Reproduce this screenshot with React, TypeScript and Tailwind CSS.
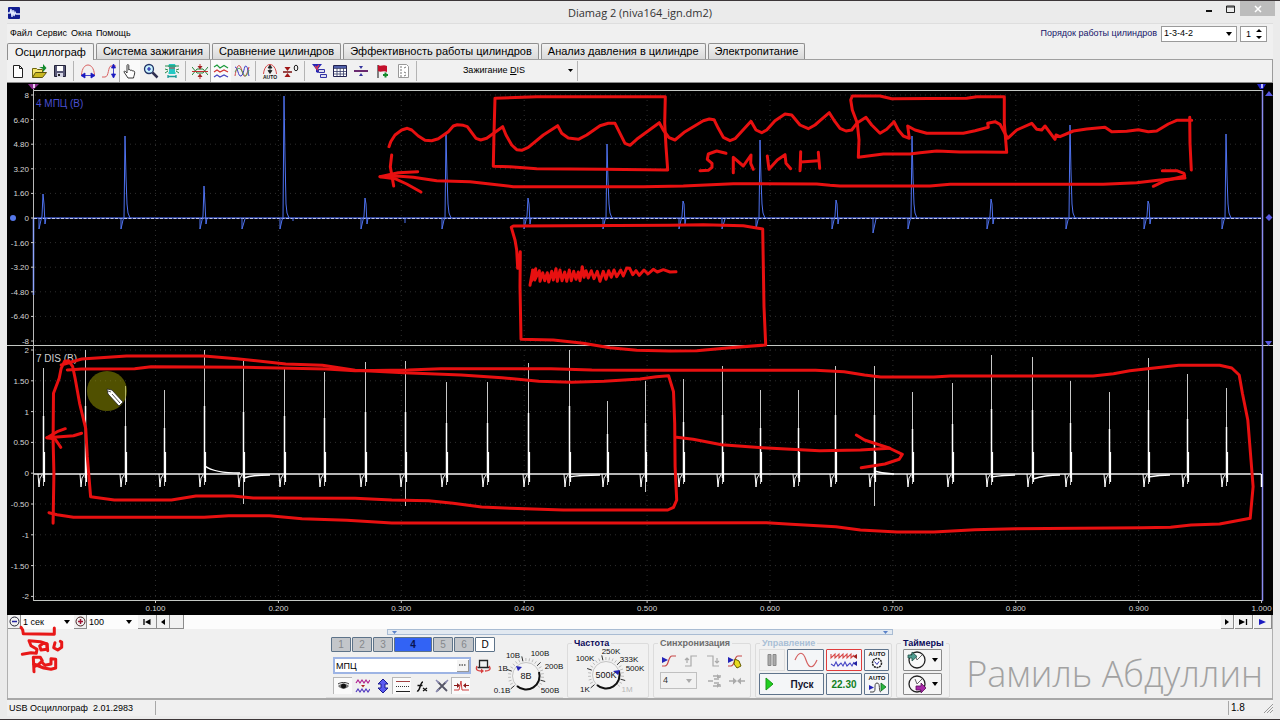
import type { ReactNode } from "react";

type Pt = [number, number];

/** Turns stroke samples taken on a finer grid into an SVG path in plot units. */
function stroke(ox: number, oy: number, kx: number, ky: number, pts: Pt[]): string {
  return pts
    .map(([x, y], i) => `${i ? "L" : "M"}${(ox + x / kx).toFixed(1)} ${(oy + y / ky).toFixed(1)}`)
    .join("");
}
const join = (a: string, b: string) => a + "L" + b.slice(1);
const a = (p: Pt[]) => stroke(370, 80, 3, 3, p);
const b = (p: Pt[]) => stroke(820, 80, 3, 3, p);
const c = (p: Pt[]) => stroke(0, 340, 2.45, 3, p);
const d = (p: Pt[]) => stroke(640, 340, 2.45, 3, p);
const e = (p: Pt[]) => stroke(0, 600, 3, 3, p);

const markerStrokes: string[] = [
  join(
    a([[57, 200], [62, 185], [75, 165], [95, 150], [112, 145], [125, 150], [145, 168], [165, 181], [185, 182], [205, 176], [235, 155], [250, 138], [262, 134], [280, 136], [292, 140], [318, 175], [332, 180], [350, 175], [398, 140], [408, 165], [425, 195], [440, 209], [455, 211], [475, 202], [520, 165], [563, 137], [575, 160], [595, 174], [625, 178], [650, 165], [690, 137], [715, 130], [735, 130], [750, 160], [765, 190], [780, 196], [800, 178], [868, 128], [880, 150], [897, 173], [915, 180], [945, 155], [1000, 122], [1018, 117], [1032, 119], [1045, 145], [1060, 172], [1080, 182], [1095, 176], [1143, 124], [1158, 150], [1175, 158], [1190, 150], [1215, 122], [1245, 102], [1265, 105], [1290, 135], [1315, 146], [1335, 135]]),
    b([[0, 122], [28, 98], [45, 125], [60, 145], [78, 153], [95, 150], [110, 130], [138, 112], [155, 135], [180, 160], [200, 148], [222, 125], [235, 150], [250, 168], [268, 175], [263, 138], [285, 150], [320, 160], [430, 160], [465, 152], [505, 142], [503, 130], [525, 125], [540, 133], [552, 155], [563, 175], [590, 150], [635, 130], [650, 148], [665, 150], [675, 138], [705, 178], [708, 165], [720, 170], [760, 153], [800, 147], [855, 142], [875, 155], [920, 154], [955, 149], [985, 155], [1010, 153], [1045, 132], [1070, 121], [1115, 121]]),
  ),
  a([[375, 55], [500, 50], [886, 50], [884, 130], [888, 200], [893, 270], [700, 268], [500, 266], [420, 260], [370, 259], [372, 160], [375, 55]]),
  b([[115, 232], [117, 180], [112, 130], [97, 90], [92, 60], [97, 48], [180, 48], [215, 56], [440, 55], [470, 50], [553, 50], [553, 130], [560, 217], [480, 216], [420, 216], [350, 213], [300, 218], [270, 222], [190, 222], [115, 232]]),
  b([[1109, 112], [1110, 190], [1114, 270]]),
  join(
    a([[30, 290], [80, 288], [130, 292], [200, 302], [300, 305], [360, 312], [430, 320], [820, 320], [940, 318], [1090, 311], [1340, 312]]),
    b([[30, 316], [60, 318], [330, 318], [390, 313], [850, 313], [950, 308], [1020, 300], [1095, 294]]),
  ),
  a([[143, 275], [85, 278], [30, 290], [75, 296], [110, 312], [153, 336]]),
  a([[65, 225], [61, 260], [71, 318]]),
  b([[1027, 272], [1070, 272], [1092, 280], [1094, 288], [1035, 302], [1000, 319]]),
  a([[1068, 220], [1040, 213], [1015, 222], [1012, 238], [1026, 250], [1026, 262], [1015, 271], [990, 272]]),
  a([[1090, 278], [1090, 232], [1120, 258], [1143, 225], [1142, 250], [1150, 268]]),
  a([[1192, 228], [1197, 268], [1222, 240], [1245, 224], [1248, 250], [1262, 266]]),
  a([[1292, 215], [1290, 272], [1292, 246], [1345, 242]]),
  a([[1345, 217], [1349, 265]]),
  a([[430, 438], [424, 442], [435, 480], [440, 510], [443, 565], [451, 515], [450, 620], [453, 778], [550, 780], [640, 790], [720, 803], [800, 811], [900, 813], [980, 812], [1080, 803], [1187, 795], [1182, 680], [1178, 447], [1120, 437], [1000, 434], [900, 436], [430, 438]]),
  a([[480, 616], [488, 570], [484, 604], [497, 566], [494, 600], [508, 572], [510, 604], [518, 578], [524, 602], [532, 578], [536, 606], [545, 574], [550, 600], [558, 566], [562, 604], [570, 570], [576, 602], [584, 576], [590, 604], [598, 570], [604, 602], [611, 574], [618, 598], [625, 576], [630, 602], [637, 560], [642, 592], [648, 572], [655, 594], [664, 572], [672, 596], [682, 574], [690, 604], [700, 574], [708, 598], [716, 572], [724, 592], [732, 570], [740, 590], [752, 570], [760, 588], [770, 564], [779, 565], [788, 584], [798, 572], [808, 586], [822, 570], [834, 582], [850, 568], [862, 576], [880, 569], [900, 576], [918, 575]]),
  join(
    join(
      c([[130, 550], [132, 400], [130, 300], [131, 160], [145, 115], [150, 85], [158, 64], [168, 62], [178, 80], [184, 115], [195, 190], [210, 265], [214, 350], [222, 470], [280, 480], [420, 480], [480, 468], [570, 468], [620, 474], [870, 475], [960, 480], [1050, 482], [1110, 490], [1180, 501], [1250, 505], [1380, 510], [1500, 510]]),
      d([[0, 510], [68, 510], [82, 502], [90, 480], [86, 380], [85, 250], [82, 155], [70, 107], [40, 110], [0, 117]]),
    ),
    c([[1480, 124], [1400, 127], [1320, 124], [1230, 113], [1130, 105], [990, 98], [870, 91], [790, 76], [700, 72], [580, 56], [500, 48], [310, 48], [200, 57], [150, 75]]),
  ),
  join(
    join(
      c([[165, 90], [200, 87], [330, 86], [370, 80], [600, 82], [800, 87], [870, 92], [1000, 90], [1080, 86], [1350, 86], [1450, 90]]),
      d([[0, 91], [430, 91], [500, 95], [550, 105], [590, 111], [720, 111], [760, 108], [1110, 108], [1160, 101], [1200, 92], [1260, 84], [1320, 76], [1420, 76], [1450, 84], [1468, 105], [1476, 160], [1489, 240], [1497, 360], [1502, 440], [1495, 535], [1420, 552], [1350, 555], [1300, 562], [1230, 563], [920, 566], [820, 569], [720, 576], [630, 576], [540, 570], [480, 560], [370, 553], [310, 548], [0, 549]]),
    ),
    c([[1500, 549], [960, 549], [850, 541], [740, 536], [660, 527], [560, 527], [500, 532], [180, 532], [140, 524], [120, 518]]),
  ),
  c([[200, 280], [180, 287], [115, 293], [140, 275], [160, 266]]),
  c([[115, 293], [135, 297], [149, 322]]),
  d([[90, 292], [130, 298], [200, 314], [300, 323], [440, 332], [540, 330], [612, 325]]),
  d([[530, 285], [550, 300], [610, 324], [643, 343], [635, 358], [600, 372], [542, 383]]),
];

const noteStrokes: string[] = [
  e([[60, 82], [65, 90], [67, 101], [160, 103], [160, 84]]),
  e([[140, 152], [138, 132], [118, 125], [84, 122], [90, 137], [108, 148], [106, 160], [90, 158], [64, 163]]),
  e([[120, 150], [116, 138], [126, 130], [138, 132], [138, 148], [120, 150]]),
  e([[162, 128], [158, 143], [170, 150], [182, 142], [182, 126], [178, 124]]),
  e([[99, 215], [97, 172], [118, 172], [124, 182], [112, 194], [100, 200]]),
  e([[98, 192], [128, 204], [150, 208], [164, 204], [164, 178], [150, 176], [150, 192], [132, 196], [122, 186]]),
];

// Channel 4: time mark, peak and whether the pulse is a main one.
const mpc: [number, number, boolean][] = [
  [43, 194, false], [125, 136, true], [204, 186, false], [284, 96, true], [365, 198, false], [446, 134, true],
  [528, 198, false], [607, 144, true], [683, 201, false], [760, 140, true], [836, 200, false], [912, 136, true],
  [991, 199, false], [1070, 125, true], [1148, 201, false], [1226, 134, true],
];
const mpcPath = mpc
  .map(([x, top, main]) =>
    main
      ? `M${x - 4} 218V229L${x - 2} 220L${x - 1} 218L${x} ${top}L${x + 1} ${Math.round((218 + top) / 2)}L${x + 2} 204L${x + 3} 213L${x + 5} 218`
      : `M${x - 4} 218V229L${x - 2} 220L${x - 1} 216L${x} ${top}L${x + 1} 204L${x + 2} 224L${x + 3} 218`,
  )
  .join("");

// Channel 7: time mark, peak, lowest point.
const dis: [number, number, number][] = [
  [43, 368, 486], [85, 350, 486], [125, 386, 485], [164, 390, 486], [204, 350, 485], [243, 361, 504], [284, 369, 485],
  [324, 372, 486], [365, 362, 486], [405, 361, 506], [446, 382, 485], [487, 382, 485], [528, 363, 485], [569, 350, 486],
  [607, 401, 485], [645, 381, 492], [683, 379, 484], [722, 366, 484], [760, 390, 484], [798, 390, 486], [835, 366, 484],
  [874, 366, 506], [912, 392, 484], [952, 383, 484], [991, 355, 485], [1032, 357, 484], [1070, 381, 485], [1109, 392, 484],
  [1148, 358, 484], [1187, 374, 484], [1226, 388, 486],
];

const mpcScale = ["8", "6.40", "4.80", "3.20", "1.60", "0", "-1.60", "-3.20", "-4.80", "-6.40", "-8"];
const disScale = ["2", "1.50", "1", "0.50", "0", "-0.50", "-1", "-1.50", "-2"];
const timeScale = ["0.100", "0.200", "0.300", "0.400", "0.500", "0.600", "0.700", "0.800", "0.900", "1.000"];
const mpcY = (i: number) => 95 + i * 24.6;
const disY = (i: number) => 350 + i * 30.8;
const timeX = (i: number) => 155.5 + i * 122.9;

function Plot() {
  return (
    <svg viewBox="7 82 1266 533" className="block h-auto w-full bg-black" role="img" aria-label="Осциллограмма">
      <rect x="7" y="82" width="1266" height="1" fill="#8a8a8a" />
      <g stroke="#2e2e2e" strokeDasharray="1 4" fill="none">
        {mpcScale.map((_, i) => (i === 5 ? null : <path key={i} d={`M35 ${mpcY(i)}H1258`} />))}
        {disScale.map((_, i) => (i === 4 ? null : <path key={i} d={`M35 ${disY(i)}H1258`} />))}
        {timeScale.slice(0, 9).map((_, i) => <path key={i} d={`M${timeX(i)} 95V600`} />)}
      </g>
      <path d="M33 90.5H1262M7 345.5H1273M33 600.5H1262" stroke="#c4c8c4" fill="none" />
      <path d="M33.500 88V601" stroke="#b9b9b9" fill="none" />
      <path d="M33.500 218V295" stroke="#8fa6ff" strokeWidth="1.500" />
      <path d="M1262.500 90V601" stroke="#8c8cf0" strokeWidth="1.500" fill="none" />
      <g stroke="#c9c9c9">
        {mpcScale.map((_, i) => <path key={i} d={`M31 ${mpcY(i)}h3`} />)}
        {disScale.map((_, i) => <path key={i} d={`M31 ${disY(i)}h3`} />)}
        {timeScale.map((_, i) => <path key={i} d={`M${timeX(i)} 600v3`} />)}
      </g>
      <g fill="#d4d4d4" fontSize="8" textAnchor="end" className="font-['Liberation_Sans',sans-serif]">
        {mpcScale.map((t, i) => <text key={t} x="29" y={mpcY(i) + 3}>{t}</text>)}
        {disScale.map((t, i) => <text key={t} x="29" y={disY(i) + 3}>{t}</text>)}
      </g>
      <g fill="#d4d4d4" fontSize="8" textAnchor="middle" className="font-['Liberation_Sans',sans-serif]">
        {timeScale.map((t, i) => <text key={t} x={timeX(i)} y="611">{t}</text>)}
      </g>
      <text x="36" y="107" fontSize="10" fill="#4a4fd0" className="font-['Liberation_Sans',sans-serif]">4 МПЦ (В)</text>
      <text x="36" y="362" fontSize="10" fill="#d0d0d0" className="font-['Liberation_Sans',sans-serif]">7 DIS (В)</text>
      <path d="M28 84h11l-5 5h-2z" fill="#8a2a8e" />
      <path d="M33 84h2v4h-2z" fill="#e8c8f0" />
      <path d="M1257 84h9l-3 5h-3z" fill="#2323c8" />
      <path d="M1261 84h2v4h-2z" fill="#b8b8ff" />
      <g fill="#5858e0">
        <path d="M1265 96l4-5 4 5zM1265 341h7l-3.500 5zM1265.500 217.500l3.500-3.500 3.500 3.500-3.500 3.500z" />
        <circle cx="13" cy="218" r="3" fill="#5577e8" />
      </g>

      <path d="M34 218H1261" stroke="#3d55c4" strokeWidth="1.500" />
      <path d="M34 218.500H1261" stroke="#e4e8ff" strokeDasharray="3 1.500" strokeWidth=".8" />
      <path d={mpcPath + "M242 218V229L245 219M722 218V229L725 219M873 218V233L876 219M405 218v5M293 218v3"} stroke="#4f72f0" strokeWidth="1" fill="none" />

      <path d="M34 474H1261" stroke="#f2f2f2" strokeWidth="1.600" />
      {dis.map(([x, top, low]) => (
        <g key={x} fill="none" stroke="#fff">
          <path d={`M${x + 0.5} ${top}V${low}`} stroke="#c8c8c8" />
          <path d={`M${x + 0.5} ${Math.round(474 - (474 - top) * 0.55)}V478`} strokeWidth="1.500" />
          <path d={`M${x + 1.500} 452V482`} strokeWidth="1.200" />
          <path d={`M${x - 5} 474L${x - 4} 487L${x - 3} 478L${x - 1} 475`} />
        </g>
      ))}
      <path d="M205 466Q214 473 240 473M244 478Q252 475 270 475M569 477Q580 475 600 475M874 471Q884 474 894 474M991 477Q1005 475 1015 475M1033 479Q1045 475 1060 475M1148 477Q1160 475 1170 475M1261.500 474V487" stroke="#fff" strokeWidth="1.500" fill="none" />

      <circle cx="107" cy="391" r="20" fill="#a0a000" fillOpacity=".5" />
      <path d="M107 389l5 1 11 12-4 4-11-12z" fill="#fff" stroke="#222" strokeWidth=".8" />
      <path d="M112 394l8 9M108 391l3 1" stroke="#555" />

      <g stroke="#e81010" strokeWidth="3" strokeLinecap="round" strokeLinejoin="round" fill="none">
        {markerStrokes.map((p) => <path key={p} d={p} />)}
      </g>
    </svg>
  );
}

function Icon({ children, w = 16, h = 16 }: { children: ReactNode; w?: number; h?: number }) {
  return (
    <svg width={w} height={h} viewBox={`0 0 ${w} ${h}`} fill="none" aria-hidden="true" className="shrink-0">
      {children}
    </svg>
  );
}

const toolGroups: { label: string; pressed?: boolean; art: ReactNode }[][] = [
  [
    { label: "Новый", art: <path d="M3.500 2.500h6l3 3v9h-9zM9.500 2.500v3h3" fill="#fff" stroke="#222" /> },
    { label: "Открыть", art: <><path d="M1.500 14.500v-9h4l1 1h5v3" fill="#f2e36a" stroke="#6b6411" /><path d="M1.500 14.500l3-5h11l-4 5z" fill="#c9b820" stroke="#5b540f" /><path d="M8 4h4V1l3.500 4-3.500 4V6" fill="#128a2c" /></> },
    { label: "Сохранить", art: <><path d="M2.500 2.500h11v11h-11z" fill="#5a5a78" stroke="#222238" /><path d="M5 3h6v5H5z" fill="#fff" /><path d="M5 10h6v4H5z" fill="#d5d5e5" /><path d="M6 11h2v2H6z" fill="#222" /></> },
  ],
  [
    { label: "Масштаб по времени", art: <><path d="M1.500 12C2 5 5 2 8 2s6 3 6.500 10" stroke="#d86060" /><path d="M2 12.500h12M1 12.500l4-2.500v5zM15 12.500l-4-2.500v5z" stroke="#1919c0" strokeWidth=".8" fill="#1919c0" /></> },
    { label: "Масштаб по амплитуде", art: <><path d="M1 14h3c4 0 3-11 6-11h5" stroke="#d86060" /><path d="M12.500 3v11M12.500 1l-2 4h4zM12.500 15l-2-4h4z" stroke="#1919c0" fill="#1919c0" strokeWidth=".8" /></> },
    { label: "Рука", pressed: true, art: <path d="M6 15l-4-6c0-1.500 1.500-1 3 1V2.500c0-1.200 1.800-1.200 1.800 0V7c1-.8 1.700-.3 1.900.5 1-.6 1.800-.2 2 .6 1-.4 2 0 2 1.200 0 2.700-1 3.700-1.200 5.700z" fill="#fff" stroke="#222" strokeWidth=".9" /> },
    { label: "Лупа", art: <><circle cx="6" cy="6" r="4.500" fill="#c8f4ff" stroke="#223366" strokeWidth="1.300" /><path d="M4 6h4M6 4v4" stroke="#1d1da8" strokeWidth="1.200" /><path d="M9.500 9.500l5 5" stroke="#303050" strokeWidth="2.500" /></> },
    { label: "Область", art: <><path d="M5 1h6l1 3h-1v5l1 1-1 1H5l-1-1 1-1V4H4z" fill="#25c8c4" /><path d="M1 3h14M1 6l3 1M15 6l-3 1M1 10l3-2M15 10l-3-2" stroke="#2a8a4a" /><path d="M5 5h6" stroke="#c04040" /><path d="M4 13.500h8M4 12v3M12 12v3" stroke="#1a9a96" strokeWidth="1.300" /></> },
  ],
  [
    { label: "Сжать", art: <><path d="M0 12L5 6h6l5 6M0 4l5 6h6l5-6" stroke="#25853a" /><path d="M0 8.500h16M8 1v4M8 16v-4" stroke="#c03030" /><path d="M5.500 3h5L8 6.500zM5.500 14h5L8 10.500z" fill="#a02222" /></> },
    { label: "Раздельно", pressed: true, art: <><path d="M1 4l3-2 3 3 4-2.500L15 5" stroke="#1c9a3b" strokeWidth="1.200" /><path d="M1 9l3-2 3 2 4-2 4 2" stroke="#d23333" strokeWidth="1.200" /><path d="M1 14l3-2 3 2 4-2 4 2" stroke="#4545c0" strokeWidth="1.200" /></> },
    { label: "Совместно", art: <><path d="M1 13C3 0 6 0 8 8s4 7 7-4" stroke="#d04848" /><path d="M1 4c3 0 3 10 6 9S10 2 12 3s2 7 3 10" stroke="#3838c8" /><path d="M1 9c3-5 5-5 8 1s4 2 6-3" stroke="#35a04a" strokeWidth=".8" /></> },
  ],
  [
    { label: "Автомасштаб", art: <><path d="M1.500 11C2 5 5 1.500 8 1.500S14 5 14.500 11" stroke="#d84848" /><path d="M8 3v7M8 2L6 5h4zM8 10.500L6 7.500h4z" stroke="#222" strokeWidth=".8" fill="#222" /><text x="8" y="15.500" fontSize="5" fontWeight="700" textAnchor="middle" fill="#111">AUTO</text></> },
    { label: "Обнулить", art: <><path d="M0 9h9" stroke="#7a1010" strokeWidth="1.500" /><path d="M1.500 4h6l-3 4zM1.500 14h6l-3-4z" fill="#a01616" /><ellipse cx="13" cy="5" rx="1.800" ry="2.800" stroke="#222" /></> },
  ],
  [
    { label: "Фильтр", art: <><path d="M1 1h10L7 6v4L5 9V6z" fill="#2626b8" /><path d="M4 3l4 5M8 2l-3 4" stroke="#d23b56" strokeWidth="1.500" /><path d="M7.500 6.500h6v3h-6zM9.500 11.500h6v3h-6z" fill="#dde" stroke="#3333a4" /></> },
    { label: "Таблица", art: <><path d="M1.500 2.500h13v11h-13z" fill="#fff" stroke="#222250" /><path d="M2 3h12v2H2z" fill="#4f5fa8" /><path d="M2 5.500h12M2 8.500h12M2 11h12M5 5v8M8.200 5v8M11.500 5v8" stroke="#333a66" strokeWidth=".8" /></> },
    { label: "Деление", art: <><path d="M1 8h14" stroke="#5b1460" strokeWidth="1.800" /><path d="M6 3h4L8 6zM6 13h4l-2-3z" fill="#33339c" /></> },
    { label: "Метка", art: <><path d="M4 2v13" stroke="#444" strokeWidth="1.300" /><path d="M4 2c3 2 5-1 9 1v6c-4-2-6 1-9-1z" fill="#c4102c" /><path d="M9 12h5M11.500 9.500v5" stroke="#148a2c" strokeWidth="2" /></> },
    { label: "Отчёт", art: <><path d="M3.500 1.500h8l2 2v11h-10z" fill="#fff" stroke="#999" /><path d="M5 4h2M5 7h2M5 10h2M5 13h2M9 5l2-1M9 9l2 1M9 13l2-1" stroke="#777" /></> },
  ],
];

function Toolbar() {
  return (
    <div className="flex h-[22px] items-center border-r border-[#9a9a9a] bg-[#f1f1f1]" role="toolbar" aria-label="Инструменты">
      {toolGroups.map((group, g) => (
        <div key={g} className="flex items-center">
          {group.map((t) => (
            <button
              key={t.label}
              type="button"
              aria-label={t.label}
              className={t.pressed ? "flex h-[22px] w-[21px] items-center justify-center border-l border-[#a8a8a8] bg-[#fafafa]" : "flex h-[22px] w-[21px] items-center justify-center"}
            >
              <Icon>{t.art}</Icon>
            </button>
          ))}
          <span className="mx-[3px] h-[20px] w-px bg-[#b4b4b4]" />
        </div>
      ))}
      <button type="button" className="flex h-[20px] w-[158px] items-center border-r border-[#b4b4b4] pr-1 text-[9px] text-black">
        <span className="flex-1 text-center">Зажигание <u>D</u>IS</span>
        <Icon w={5} h={4}><path d="M0 0h5L2.500 3z" fill="#000" /></Icon>
      </button>
    </div>
  );
}

const tabs = ["Осциллограф", "Система зажигания", "Сравнение цилиндров", "Эффективность работы цилиндров", "Анализ давления в цилиндре", "Электропитание"];

function Select({ label, options, className, arrow = "#000" }: { label: string; options: string[]; className: string; arrow?: string }) {
  return (
    <span className={`relative inline-flex items-center ${className}`}>
      <select aria-label={label} className="h-full w-full appearance-none bg-transparent pl-[2px] text-[9px] leading-none outline-none">
        {options.map((o) => <option key={o}>{o}</option>)}
      </select>
      <svg width="6" height="4" viewBox="0 0 6 4" className="pointer-events-none absolute right-[4px]" aria-hidden="true">
        <path d="M0 0h6L3 4z" fill={arrow} />
      </svg>
    </span>
  );
}

function Group({ title, titleClass, className, children }: { title: string; titleClass: string; className: string; children: ReactNode }) {
  return (
    <fieldset className={`h-[61px] rounded-[2px] border border-[#dcdcdc] bg-[#f1f1f1] ${className}`}>
      <legend className={`ml-[4px] px-[2px] text-[9px] leading-[12px] font-bold ${titleClass}`}>{title}</legend>
      {children}
    </fieldset>
  );
}

type Mark = { t: string; x: number; y: number; faded?: boolean };
function Knob({ width, cx, value, marks, pointer }: { width: number; cx: number; value: string; marks: Mark[]; pointer: string }) {
  const ticks = Array.from({ length: 23 }, (_, i) => 140 + i * 11.8);
  return (
    <svg width={width} height="50" viewBox={`0 0 ${width} 50`} role="img" aria-label={value} className="shrink-0 font-['Liberation_Sans',sans-serif]">
      {ticks.map((t, i) => {
        const r = (t * Math.PI) / 180;
        const far = i % 5 === 0 ? 20 : 18;
        return (
          <line
            key={t}
            x1={(cx + 15 * Math.cos(r)).toFixed(1)}
            y1={(29 + 15 * Math.sin(r)).toFixed(1)}
            x2={(cx + far * Math.cos(r)).toFixed(1)}
            y2={(29 + far * Math.sin(r)).toFixed(1)}
            stroke={i % 5 === 0 ? "#333" : "#bbb"}
          />
        );
      })}
      <circle cx={cx} cy="29" r="13.500" fill="#f4f4f4" stroke="#c4c4c4" />
      <path d={`M${cx + 13} 25A13.500 13.500 0 0 1 ${cx - 9} 39`} stroke="#111" strokeWidth="2" fill="none" />
      <path d={pointer} fill="#2424b4" />
      <text x={cx} y="32" fontSize="9" textAnchor="middle" fill="#111">{value}</text>
      {marks.map((m) => (
        <text key={m.t} x={m.x} y={m.y} fontSize="8" textAnchor="middle" fill={m.faded ? "#b8b8b8" : "#111"}>{m.t}</text>
      ))}
    </svg>
  );
}

const channelTools: { label: string; pressed?: boolean; art: ReactNode }[] = [
  { label: "Видимость", pressed: true, art: <><path d="M2 8c3-3 8-3 11 0-3 3.500-8 3.500-11 0z" fill="#777" /><circle cx="7.500" cy="8" r="2.500" fill="#111" /><path d="M2 6c3-2 8-2 11 0" stroke="#333" /></> },
  { label: "Сигнал", art: <><path d="M1 5l2-3 2 3 2-3 2 3 2-3 2 3 2-3" stroke="#b02090" strokeWidth="1.200" /><path d="M1 14l2-3 2 3 2-3 2 3 2-3 2 3 2-3" stroke="#5038c0" strokeWidth="1.200" /><path d="M6 7h4L8 9.500z" fill="#b02020" /></> },
  { label: "Смещение", art: <path d="M8 1l5 5h-3v4h3l-5 5-5-5h3V6H3z" fill="#5a5af0" stroke="#1a1a90" /> },
  { label: "Уровни", pressed: true, art: <><path d="M1 3.500h14" stroke="#a04040" /><path d="M1 8.500h14" stroke="#333" strokeDasharray="1 1" /><path d="M1 13.500h14" stroke="#222" /></> },
  { label: "Функция", art: <><path d="M3 13c3 1 3-9 6-9M3.500 7.500h5" stroke="#111" strokeWidth="1.500" /><path d="M9 10l4 3M13 10l-4 3" stroke="#111" strokeWidth="1.200" /></> },
  { label: "Настройка", art: <><path d="M4 4l9 9M12 4l-9 9" stroke="#556" strokeWidth="1.800" /><path d="M2 2l3 3M11 5l3-3M2 14l3-3" stroke="#8888b0" strokeWidth="1.500" /></> },
  { label: "Разделить", pressed: true, art: <><path d="M0 12h5l2-9 1 9h7" stroke="#d04040" /><path d="M0 7.500h4M11 7.500h4" stroke="#8a1a1a" strokeWidth="1.200" /><path d="M3 5l3 2.500L3 10zM12 5L9 7.500 12 10z" fill="#8a1a1a" /></> },
];

const chip = "flex h-[15px] items-center justify-center rounded-[1px] border border-[#5d7389] text-[10px] leading-none";
const ctl = "flex items-center justify-center rounded-[1px] border border-[#5f748c] bg-[#f4f6f8]";

function ControlPanel() {
  return (
    <section className="relative flex flex-col items-center" aria-label="Панель управления">
      <div className="flex h-[6px] w-[506px] items-center justify-between border border-[#a9bcd3] bg-[#e2e9f1] px-[4px]">
        <Icon w={5} h={3}><path d="M0 0h5L2.500 3z" fill="#5a82c8" /></Icon>
        <Icon w={5} h={3}><path d="M0 0h5L2.500 3z" fill="#5a82c8" /></Icon>
      </div>
      <div className="flex items-end gap-[4px] pt-[2px] pr-[4px]">
        <div className="flex h-[61px] w-[237px] border-b border-[#dcdcdc] pl-[5px]">
          <div className="flex w-[166px] shrink-0 flex-col">
            <div className="flex gap-px">
              {["1", "2", "3"].map((n) => <button key={n} type="button" className={`${chip} w-[20px] bg-[#c3c6ca] text-[#85888c]`}>{n}</button>)}
              <button type="button" className={`${chip} w-[38px] border-[#1b3a90] bg-[#3263f5] font-bold text-[#0a1450]`}>4</button>
              {["5", "6"].map((n) => <button key={n} type="button" className={`${chip} w-[20px] bg-[#c3c6ca] text-[#85888c]`}>{n}</button>)}
              <button type="button" className={`${chip} w-[20px] bg-white text-black`}>D</button>
            </div>
            <div className="mt-[5px] flex items-center gap-[4px] pl-[2px]">
              <div className="flex h-[17px] w-[138px] items-center border-2 border-[#9db4e4] bg-white">
                <input aria-label="Название канала" defaultValue="МПЦ" className="h-full w-full min-w-0 bg-transparent pl-px text-[9px] outline-none" />
                <button type="button" aria-label="Выбрать" className="flex h-[12px] w-[12px] shrink-0 items-center justify-center border-r border-b border-[#999] bg-[#f4f4f4]">
                  <Icon w={7} h={2}><path d="M0 1h7" stroke="#111" strokeDasharray="1.500 1" /></Icon>
                </button>
              </div>
              <Icon><path d="M4.500 2.500h8v7h-8zM2.500 9.500h12" stroke="#222" strokeWidth="1.300" /><path d="M2 8c-2 4 1 5 4 5M14 8c3 4-1 5-4 5" stroke="#d84040" strokeWidth="1.300" /><path d="M6 10.500l3 2.500-3 2.500z" fill="#d84040" /></Icon>
            </div>
            <div className="mt-[3px] flex pl-[2px]">
              {channelTools.map((t) => (
                <button key={t.label} type="button" aria-label={t.label} className={t.pressed ? "flex h-[17px] w-[19px] items-center justify-center border-t border-l border-[#b8b8b8] bg-[#fafafa]" : "flex h-[17px] w-[20px] items-center justify-center"}>
                  <Icon w={15} h={16}>{t.art}</Icon>
                </button>
              ))}
            </div>
          </div>
          <div className="-ml-[4px] self-end">
            <Knob
              width={72}
              cx={33}
              value="8В"
              pointer="M23 19l6 1-4 4z"
              marks={[{ t: "0.1В", x: 9, y: 46 }, { t: "1В", x: 10, y: 24 }, { t: "10В", x: 20, y: 11 }, { t: "100В", x: 47, y: 9 }, { t: "200В", x: 61, y: 22 }, { t: "500В", x: 57, y: 46 }]}
            />
          </div>
        </div>
        <Group title="Частота" titleClass="text-[#0a0a5a]" className="w-[82px]">
          <div className="-mt-[3px]">
            <Knob
              width={80}
              cx={38}
              value="500K"
              pointer="M52 24l-7 1 5 4z"
              marks={[{ t: "1K", x: 17, y: 46 }, { t: "100K", x: 17, y: 15 }, { t: "250K", x: 43, y: 8 }, { t: "333K", x: 61, y: 16 }, { t: "500K", x: 67, y: 25 }, { t: "1M", x: 59, y: 46, faded: true }]}
            />
          </div>
        </Group>
        <Group title="Синхронизация" titleClass="text-[#6c6c6c]" className="w-[98px]">
          <div className="flex items-center gap-[6px] pt-[4px] pl-[7px]">
            <Icon><path d="M1 13h3c4 0 3-10 7-10h4" stroke="#c84848" strokeWidth="1.200" /><path d="M1 4l6 3-6 3z" fill="#2424b8" /></Icon>
            <Icon><path d="M2 13h6V3h6M4 10V5M2 7l2-2 2 2" stroke="#aaa" strokeWidth="1.200" /></Icon>
            <Icon><path d="M2 3h6v10h6M12 5v5M10 8l2 2 2-2" stroke="#aaa" strokeWidth="1.200" /></Icon>
            <Icon><path d="M1 13h3c4 0 3-10 7-10h4" stroke="#c84848" strokeWidth="1.200" /><path d="M1 4l6 3-6 3z" fill="#2424b8" /><path d="M8 6l4 2 2 5-4 2-3-4z" fill="#e8dc20" stroke="#665c00" /></Icon>
          </div>
          <div className="flex items-center gap-[6px] pt-[3px] pl-[6px]">
            <Select label="Канал синхронизации" options={["4"]} arrow="#aaa" className="mr-[4px] h-[17px] w-[37px] border border-[#c0c0c0] text-[#333]" />
            <Icon><path d="M1 8h5M6 3h8M6 13h8M7 6h5M7 10h5" stroke="#aaa" strokeWidth="1.300" /><path d="M10 1l4 4h-4zM10 15l4-4h-4z" fill="#aaa" /></Icon>
            <Icon><path d="M0 8h6M10 8h6" stroke="#aaa" strokeWidth="1.300" /><path d="M4 4.500L8 8l-4 3.500zM12 4.500L8 8l4 3.500z" fill="#aaa" /></Icon>
          </div>
        </Group>
        <Group title="Управление" titleClass="text-[#a9bfd6]" className="w-[137px]">
          <div className="grid grid-cols-[26px_37px_36px_25px] gap-x-[2px] gap-y-[2px] pl-[3px]">
            <button type="button" aria-label="Пауза" className="flex h-[22px] items-center justify-center border border-[#dedede]">
              <Icon w={10} h={12}><path d="M1 .5h3v11H1zM6 .5h3v11H6z" fill="#aaa" stroke="#888" /></Icon>
            </button>
            <button type="button" aria-label="Синусоида" className={`${ctl} h-[22px]`}>
              <Icon w={24} h={16}><path d="M1 8C5-1 9-1 12 8s7 9 11 0" stroke="#d46060" strokeWidth="1.200" /></Icon>
            </button>
            <button type="button" aria-label="Два канала" className="flex h-[22px] items-center justify-center rounded-[1px] border border-[#e03c3c] bg-[#f6f6fa]">
              <Icon w={28} h={16}><path d="M1 2v4l4-4v4l4-4v4l4-4v4l4-4v4l4-4v4l3-3" stroke="#d84848" strokeWidth="1.100" /><path d="M1 12l3 2 2-4 2 4 3-3 2 3 2-4 2 4 3-3 2 3 2-4" stroke="#4444c4" strokeWidth="1.100" /><path d="M27 2v5l-4-2.500z" fill="#a02020" /><path d="M27 9v5l-4-2.500z" fill="#2020a0" /></Icon>
            </button>
            <button type="button" aria-label="Авто" className={`${ctl} h-[22px]`}>
              <Icon w={20} h={20}><text x="10" y="6" fontSize="6" fontWeight="700" textAnchor="middle" fill="#111">AUTO</text><circle cx="10" cy="13" r="4.500" fill="#fff" stroke="#222" strokeWidth="1.500" strokeDasharray="2 .7" /><path d="M7.500 11.500l2.500 3 2-3" stroke="#3333aa" /></Icon>
            </button>
            <button type="button" className={`${ctl} col-span-2 h-[22px] gap-[16px] pr-[4px] text-[10px] font-bold text-[#151530]`}>
              <Icon w={9} h={14}><path d="M1 1l7 6-7 6z" fill="#20d020" stroke="#189818" /></Icon>Пуск
            </button>
            <output className={`${ctl} h-[22px] text-[10px] font-bold text-[#118022]`}>22.30</output>
            <button type="button" aria-label="Автозапуск" className={`${ctl} h-[22px]`}>
              <Icon w={20} h={20}><text x="10" y="6" fontSize="6" fontWeight="700" textAnchor="middle" fill="#111">AUTO</text><path d="M3 18h3c4 0 0-9 4-9s1 9 4 9" stroke="#444" /><path d="M2 11l5 2.500L2 16z" fill="#2424b8" /><path d="M14 9l5 4-5 4z" fill="#28b840" stroke="#0b6b1b" strokeWidth=".8" /></Icon>
            </button>
          </div>
        </Group>
        <Group title="Таймеры" titleClass="text-[#0a0a5a]" className="w-[54px]">
          <div className="flex flex-col gap-[2px] pl-[6px]">
            {["Таймер запуска", "Таймер остановки"].map((l, i) => (
              <button key={l} type="button" aria-label={l} className="flex h-[22px] w-[39px] items-center justify-center gap-[5px] rounded-[1px] border border-[#8a8a8a] bg-[#f5f5f5]">
                <Icon w={20} h={20}>
                  <circle cx="10" cy="10" r="8" fill="#fafafa" stroke="#222" strokeWidth="1.300" />
                  <path d="M10 10L8 5M10 10l5-5" stroke="#666" />
                  {i === 0 ? <path d="M1 5h4V2l5 4.500L5 11V8H1z" fill="#4f9c90" stroke="#245048" strokeWidth=".8" /> : <path d="M9 12h5v-3l5 5-5 5v-3H9z" fill="#a828a8" stroke="#5b105b" strokeWidth=".8" />}
                </Icon>
                <Icon w={6} h={4}><path d="M0 0h6L3 4z" fill="#000" /></Icon>
              </button>
            ))}
          </div>
        </Group>
      </div>
      <svg width="64" height="50" viewBox="12 624 64 50" className="pointer-events-none absolute -top-[5px] left-[5px]" aria-hidden="true">
        <g stroke="#e81818" strokeWidth="3" strokeLinecap="round" strokeLinejoin="round" fill="none">
          {noteStrokes.map((p) => <path key={p} d={p} />)}
        </g>
      </svg>
      <p className="pointer-events-none absolute right-[9px] bottom-0 font-['Open_Sans',sans-serif] text-[36px] leading-[48px] font-light whitespace-nowrap text-[#a2a2a2]">Рамиль Абдуллин</p>
    </section>
  );
}

function ScrollRow() {
  const step = "flex h-[14px] items-center justify-center border-r border-b border-[#8c8c8c] bg-[#f1f1f1]";
  return (
    <div className="flex h-[14px] items-center bg-[#fcfcfc]">
      <button type="button" aria-label="Уменьшить" className={`${step} w-[13px]`}>
        <Icon w={11} h={11}><circle cx="5.500" cy="5.500" r="4.500" stroke="#223" /><path d="M3 5.500h5" stroke="#2222a0" strokeWidth="1.500" /></Icon>
      </button>
      <Select label="Развёртка" options={["1 сек"]} className="h-[14px] w-[53px]" />
      <button type="button" aria-label="Увеличить" className={`${step} w-[13px]`}>
        <Icon w={11} h={11}><circle cx="5.500" cy="5.500" r="4.500" stroke="#422" /><path d="M3 5.500h5M5.500 3v5" stroke="#a01030" strokeWidth="1.500" /></Icon>
      </button>
      <Select label="Масштаб, %" options={["100"]} className="mr-[2px] h-[14px] w-[49px]" />
      <button type="button" aria-label="В начало" className={`${step} w-[19px]`}><Icon w={8} h={6}><path d="M1 0v6" stroke="#000" strokeWidth="1.300" /><path d="M7.500 0v6L2 3z" fill="#000" /></Icon></button>
      <button type="button" aria-label="Назад" className={`${step} w-[13px]`}><Icon w={4} h={6}><path d="M4 0v6L0 3z" fill="#000" /></Icon></button>
      <span className={`${step} w-[14px]`} />
      <span className="flex-1" />
      <button type="button" aria-label="Вперёд" className={`${step} mr-[1px] w-[13px]`}><Icon w={4} h={6}><path d="M0 0v6l4-3z" fill="#000" /></Icon></button>
      <button type="button" aria-label="В конец" className={`${step} mr-[1px] w-[18px]`}><Icon w={9} h={6}><path d="M0 0v6l6-3z" fill="#000" /><path d="M7.500 0v6" stroke="#000" strokeWidth="1.300" /></Icon></button>
      <button type="button" aria-label="Воспроизвести" className={`${step} w-[18px]`}><Icon w={7} h={8}><path d="M0 1v6l7-3z" fill="#1b1bc0" /></Icon></button>
    </div>
  );
}

export default function App() {
  return (
    <div className="flex min-h-screen flex-col border-t border-b border-[#3c3638] bg-[#ebebeb] px-[7px] font-['Liberation_Sans',sans-serif] text-black">
      <header className="grid h-[22px] grid-cols-[1fr_auto_1fr] items-center">
        <Icon w={13} h={13}><rect x="1" y="1" width="12" height="12" rx="1" fill="#101c90" /><path d="M1 7h2l1-4 1 8 1-7 1 6 1-4 1 2h4" stroke="#dfe8ff" strokeWidth="1.300" /></Icon>
        <h1 className="font-['Open_Sans',sans-serif] text-[11px] leading-none text-[#333]">Diamag 2 (niva164_ign.dm2)</h1>
        <div className="-mr-[2px] flex items-start justify-end self-start">
          <button type="button" aria-label="Свернуть" className="flex h-[15px] w-[22px] items-center justify-center"><Icon w={8} h={8}><path d="M1 6h6" stroke="#111" strokeWidth="2" /></Icon></button>
          <button type="button" aria-label="Развернуть" className="flex h-[15px] w-[20px] items-center justify-center"><Icon w={9} h={8}><path d="M.5 1h8v6.500h-8zM.5 2h8" stroke="#222" /></Icon></button>
          <button type="button" aria-label="Закрыть" className="flex h-[15px] w-[35px] items-center justify-center bg-[#bcbcbc]"><Icon w={8} h={8}><path d="M1 1l6 6M7 1L1 7" stroke="#fff" strokeWidth="1.500" /></Icon></button>
        </div>
      </header>
      <div className="flex h-[20px] items-center border-t border-[#dedede] bg-[#f0f0f0] pl-[3px]">
        <nav className="flex gap-[4px] text-[9px]" aria-label="Меню">
          {["Файл", "Сервис", "Окна", "Помощь"].map((m) => <button key={m} type="button">{m}</button>)}
        </nav>
        <div className="ml-auto flex items-center pr-[6px]">
          <label htmlFor="order" className="mr-[4px] text-[9px] text-[#15156a]">Порядок работы цилиндров</label>
          <span className="relative flex items-center">
            <select id="order" className="h-[16px] w-[76px] appearance-none border border-[#9a9a9a] bg-white pl-[2px] text-[9px] leading-none">
              <option>1-3-4-2</option>
            </select>
            <svg width="6" height="4" viewBox="0 0 6 4" className="pointer-events-none absolute right-[5px]" aria-hidden="true"><path d="M0 0h6L3 4z" fill="#000" /></svg>
          </span>
          <span className="ml-[3px] flex h-[16px] w-[27px] items-center border border-[#9a9a9a] bg-white">
            <input aria-label="Номер цилиндра" defaultValue="1" className="w-[14px] pl-[5px] text-[9px] leading-none outline-none" />
            <Icon w={8} h={12}><path d="M1 4l3-3 3 3zM1 8l3 3 3-3z" fill="#000" /></Icon>
          </span>
        </div>
      </div>
      <div className="flex h-[17px] items-end gap-[2px] border-b border-[#a0a0a0] bg-[#f0f0f0]" role="tablist">
        {tabs.map((t, i) => (
          <button
            key={t}
            type="button"
            role="tab"
            aria-selected={i === 0}
            className={
              i === 0
                ? "-mb-px flex h-[17px] items-center rounded-t-[2px] border border-b-0 border-[#8f8f8f] bg-[#f1f1f1] px-[7px] text-[11px] leading-none whitespace-nowrap"
                : "flex h-[16px] items-center rounded-t-[2px] border border-b-0 border-[#8f8f8f] bg-linear-to-b from-[#f2f2f2] to-[#d9d9d9] px-[6px] text-[11px] leading-none whitespace-nowrap"
            }
          >
            {t}
          </button>
        ))}
      </div>
      <Toolbar />
      <Plot />
      <div className="border-x border-[#b0b0b0] bg-[#f0f0f0]">
        <ScrollRow />
        <ControlPanel />
      </div>
      <footer className="flex h-[18px] items-center border-t-2 border-[#a8a8a8] bg-[#f0f0f0] text-[9px]">
        <span className="w-[149px] border-r border-[#a8a8a8] pl-[2px] leading-[14px] whitespace-pre">USB Осциллограф  2.01.2983</span>
        <span className="ml-auto w-[35px] border-l border-[#a8a8a8] pl-[2px] text-[10px] leading-[14px]">1.8</span>
        <Icon w={10} h={10}><path d="M1 10l9-9M4 10l6-6M7 10l3-3" stroke="#999" /></Icon>
      </footer>
    </div>
  );
}
